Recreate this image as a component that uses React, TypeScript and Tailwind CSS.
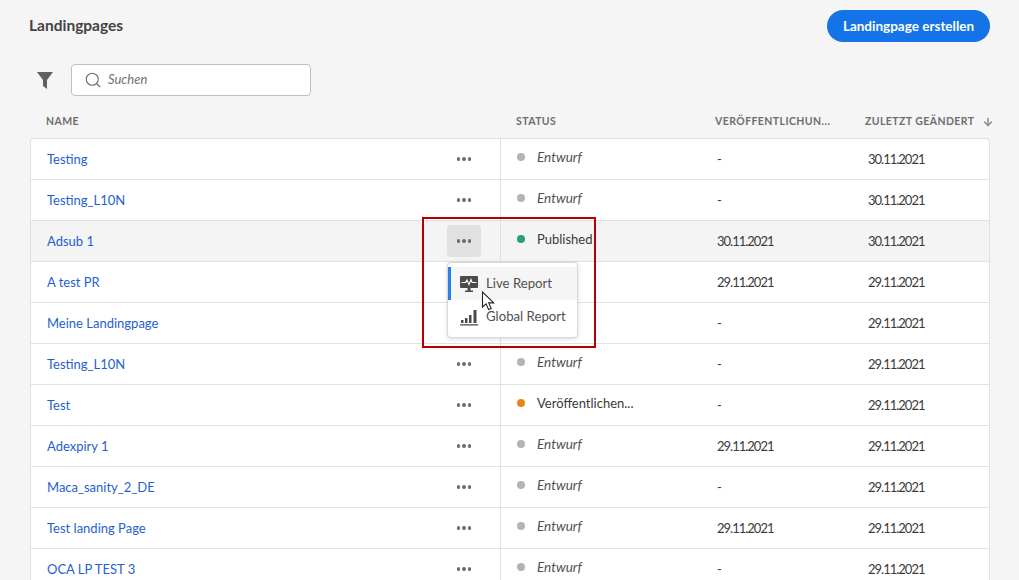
import { Search, ArrowDown } from "lucide-react";

// status text of the 4th and 5th row is covered by the open menu
const rows = [
  { name: "Testing", status: "Entwurf", published: "-", changed: "30.11.2021" },
  { name: "Testing_L10N", status: "Entwurf", published: "-", changed: "30.11.2021" },
  { name: "Adsub 1", status: "Published", published: "30.11.2021", changed: "30.11.2021", active: true },
  { name: "A test PR", status: "", published: "29.11.2021", changed: "29.11.2021" },
  { name: "Meine Landingpage", status: "", published: "-", changed: "29.11.2021" },
  { name: "Testing_L10N", status: "Entwurf", published: "-", changed: "29.11.2021" },
  { name: "Test", status: "Veröffentlichen...", published: "-", changed: "29.11.2021" },
  { name: "Adexpiry 1", status: "Entwurf", published: "29.11.2021", changed: "29.11.2021" },
  { name: "Maca_sanity_2_DE", status: "Entwurf", published: "-", changed: "29.11.2021" },
  { name: "Test landing Page", status: "Entwurf", published: "29.11.2021", changed: "29.11.2021" },
  { name: "OCA LP TEST 3", status: "Entwurf", published: "-", changed: "29.11.2021" },
];

function Dots() {
  return (
    <span className="flex gap-[2px]">
      <span className="h-[3.5px] w-[3.5px] rounded-full bg-[#6a6a6a]" />
      <span className="h-[3.5px] w-[3.5px] rounded-full bg-[#6a6a6a]" />
      <span className="h-[3.5px] w-[3.5px] rounded-full bg-[#6a6a6a]" />
    </span>
  );
}

function StatusDot({ status }: { status: string }) {
  const color = status === "Entwurf" ? "bg-[#b3b3b3]" : status === "Veröffentlichen..." ? "bg-[#e68619]" : "bg-[#2d9d78]";
  return <span className={`h-2 w-2 rounded-full ${color}`} />;
}

function Row({ row }: { row: (typeof rows)[number] }) {
  return (
    <div className={`flex h-[41px] shrink-0 items-center border-b border-[#e1e1e1] text-[13px] ${row.active ? "bg-[#f4f4f4]" : ""}`}>
      <div className="flex h-full w-[470px] shrink-0 items-center justify-between border-r border-[#e1e1e1] pl-4 pr-[19px]">
        <a className="pt-[2px] text-[#1f5fd0]">{row.name}</a>
        <span className={`flex h-8 w-[34px] items-center justify-center rounded-[4px] ${row.active ? "bg-[#e1e1e1]" : ""}`}>
          <Dots />
        </span>
      </div>
      <div className="flex w-[199px] shrink-0 items-center gap-[12px] pb-1 pl-4">
        <StatusDot status={row.status} />
        <span className={row.status === "Entwurf" ? "text-[13.5px] italic text-[#505050]" : "pt-[2px] text-[#3a3a3a]"}>{row.status}</span>
      </div>
      <div className="w-[168px] shrink-0 pl-[17px] pt-[2px] tracking-[-1px] text-[#3a3a3a]">{row.published}</div>
      <div className="pt-[2px] tracking-[-1px] text-[#3a3a3a]">{row.changed}</div>
    </div>
  );
}

function LiveIcon() {
  return (
    <svg width="18" height="18" viewBox="0 0 18 18" fill="#4b4b4b">
      <path d="M1 1h16a1 1 0 0 1 1 1v10a1 1 0 0 1-1 1H1a1 1 0 0 1-1-1V2a1 1 0 0 1 1-1Z" />
      <path d="M7.5 13h3v2.5h-3zM5 15.5h8V17H5z" />
      <path d="M1.5 7.5h4l1.5-2.5 2 4.5 2-5 1.2 3h4.3" fill="none" stroke="#fff" strokeWidth="1.1" />
    </svg>
  );
}

function GlobalIcon() {
  return (
    <svg width="18" height="18" viewBox="0 0 18 18" fill="#4b4b4b">
      <path d="M1 12h2.5v3H1zM5 10h2.5v5H5zM9 7h2.5v8H9zM13.5 2h3v13h-3zM0 16.2h18V17.4H0z" />
    </svg>
  );
}

export default function App() {
  return (
    <div className="relative flex h-[580px] w-[1019px] flex-col overflow-hidden bg-[#f5f5f5] font-['Lato',sans-serif]">
      <header className="flex h-[52px] shrink-0 items-center justify-between px-[29px]">
        <h1 className="text-[15.5px] font-bold text-[#444]">Landingpages</h1>
        <button className="flex h-8 w-[163px] items-center justify-center rounded-full bg-[#1473e6] text-[13.5px] font-bold text-white">
          Landingpage erstellen
        </button>
      </header>

      <div className="mt-3 flex shrink-0 items-center gap-[18px] pl-[37px]">
        <svg width="16" height="18" viewBox="0 0 16 18" fill="#606060">
          <path d="M0 1h16L10 9v9l-4-3V9Z" />
        </svg>
        <div className="flex h-8 w-[240px] items-center gap-[6px] rounded-[4px] border border-[#c0c0c0] bg-white pl-3">
          <Search size={18} strokeWidth={1.5} className="text-[#6e6e6e]" />
          <span className="text-[13px] italic text-[#707070]">Suchen</span>
        </div>
      </div>

      <div className="mt-4 flex h-[17px] shrink-0 items-center pt-[2px] text-[10.5px] font-bold tracking-[0.42px] text-[#6e6e6e]">
        <div className="w-[516px] pl-[46px]">NAME</div>
        <div className="w-[199px]">STATUS</div>
        <div className="w-[150px]">VERÖFFENTLICHUN...</div>
        <div className="flex items-center gap-[8px]">
          ZULETZT GEÄNDERT
          <ArrowDown size={12} strokeWidth={3} className="text-[#8a8a8a]" />
        </div>
      </div>

      <div className="ml-[30px] mt-[9px] flex w-[960px] flex-col rounded-t-[4px] border-x border-t border-[#e1e1e1] bg-white">
        {rows.map((row, i) => (
          <Row key={i} row={row} />
        ))}
      </div>

      <div className="absolute left-[447px] top-[262px] w-[131px] rounded-[4px] border border-[#d8d8d8] bg-white py-1 text-[13.2px] text-[#505050] shadow-[0_1px_4px_rgba(0,0,0,0.15)]">
        <div className="flex h-[33px] items-center gap-[8px] border-l-[3px] border-[#2680eb] bg-[#f5f5f5] pl-[9px]">
          <LiveIcon />
          Live Report
        </div>
        <div className="flex h-[33px] items-center gap-[8px] pl-[12px]">
          <GlobalIcon />
          Global Report
        </div>
      </div>

      <svg className="absolute left-[481px] top-[291px]" width="15" height="21" viewBox="0 0 15 21">
        <path d="M1.5 1v15l3.6-3.2 2.5 5.8 2.6-1.1-2.5-5.6h5Z" fill="#fff" stroke="#222" strokeWidth="1.1" />
      </svg>

      <div className="pointer-events-none absolute left-[422px] top-[217px] h-[131px] w-[174px] border-2 border-[#b40000]" />
    </div>
  );
}
